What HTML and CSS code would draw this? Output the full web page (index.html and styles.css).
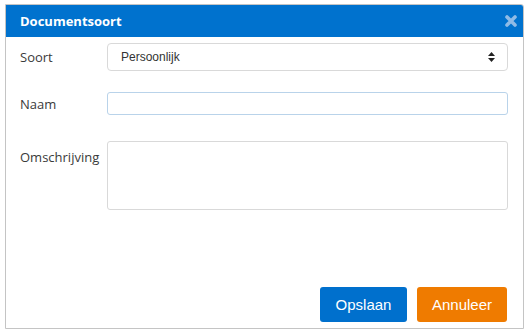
FILE: index.html
```html
<!DOCTYPE html>
<html lang="nl">
<head>
    <meta charset="UTF-8">
    <title>Documentsoort</title>
    <link rel="stylesheet" href="styles.css">
</head>
<body>
    <div class="dialog">
        <div class="dialog-header">
            <span class="dialog-title">Documentsoort</span>
            <span class="dialog-close">
                <svg width="12" height="12" viewBox="0 0 12 12"><path d="M2 2 L10 10 M10 2 L2 10" stroke="currentColor" stroke-width="3.6" stroke-linecap="round"/></svg>
            </span>
        </div>
        <div class="dialog-body">
            <div class="form-row row-soort">
                <label class="form-label">Soort</label>
                <div class="select-box">
                    <span>Persoonlijk</span>
                    <svg class="select-arrows" width="7" height="10" viewBox="0 0 7 10"><path d="M3.5 0 L7 4 H0 Z M0 6 H7 L3.5 10 Z" fill="#222"/></svg>
                </div>
            </div>
            <div class="form-row row-naam">
                <label class="form-label">Naam</label>
                <input type="text" class="text-input">
            </div>
            <div class="form-row row-omschrijving">
                <label class="form-label label-top">Omschrijving</label>
                <textarea class="text-area"></textarea>
            </div>
        </div>
        <div class="dialog-footer">
            <button class="btn btn-save">Opslaan</button>
            <button class="btn btn-cancel">Annuleer</button>
        </div>
    </div>
</body>
</html>
```

FILE: styles.css
```css
* {
    box-sizing: border-box;
}
html, body {
    margin: 0;
    background: #fff;
}
body {
    padding: 4px 0 0 5px;
    font-family: "Open Sans", "Noto Sans", sans-serif;
}
.dialog {
    width: 519px;
    height: 325px;
    border: 1px solid #c4c4c4;
    border-top-right-radius: 3px;
    background: #fff;
    display: flex;
    flex-direction: column;
}
.dialog-header {
    height: 32px;
    background: #0072ce;
    border-top-right-radius: 2px;
    display: flex;
    align-items: center;
    justify-content: space-between;
    padding: 0 6px 0 14px;
}
.dialog-title {
    color: #fff;
    font-weight: bold;
    font-size: 13px;
}
.dialog-close {
    color: #8fbbe6;
    display: flex;
}
.dialog-body {
    flex: 1;
    padding: 6px 15px 0 14px;
}
.form-row {
    display: grid;
    grid-template-columns: 87px 1fr;
    align-items: center;
}
.row-naam { margin-top: 21px; }
.row-omschrijving { margin-top: 26px; align-items: start; }
.form-label {
    font-size: 13px;
    color: #3a3a3a;
}
.label-top { padding-top: 7px; }
.select-box {
    height: 28px;
    border: 1px solid #d9d9d9;
    border-radius: 4px;
    display: flex;
    align-items: center;
    justify-content: space-between;
    padding: 0 12px 0 13px;
    font-family: "Liberation Sans", Arial, sans-serif;
    font-size: 12px;
    color: #333;
}
.text-input {
    height: 23px;
    border: 1px solid #b9d3ea;
    border-radius: 3px;
    outline: none;
    margin: 0;
}
.text-area {
    height: 69px;
    border: 1px solid #d9d9d9;
    border-radius: 3px;
    resize: none;
    margin: 0;
    outline: none;
}
.dialog-footer {
    display: flex;
    justify-content: flex-end;
    gap: 10px;
    padding: 0 16px 6px 0;
}
.btn {
    height: 35px;
    border: none;
    border-radius: 3px;
    color: #fff;
    font-family: "Liberation Sans", Arial, sans-serif;
    font-size: 15px;
    padding: 0;
}
.btn-save {
    width: 87px;
    background: #0070cd;
}
.btn-cancel {
    width: 90px;
    background: #ef7b00;
}
```
